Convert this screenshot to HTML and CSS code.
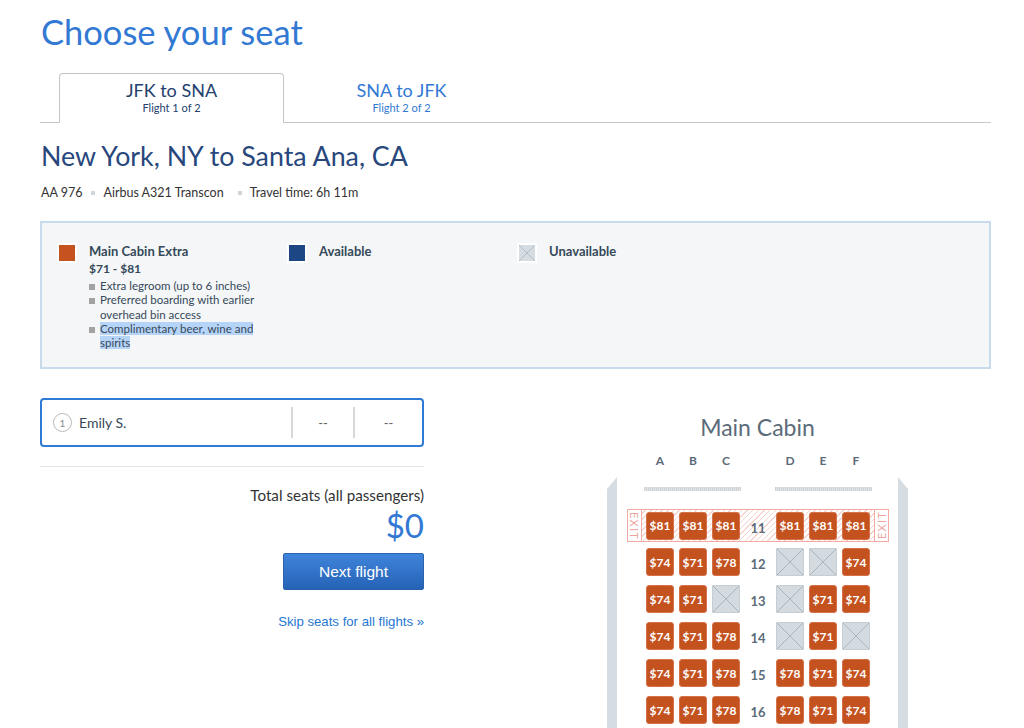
FILE: index.html
```html
<!DOCTYPE html>
<html lang="en">
<head>
<meta charset="utf-8">
<title>Choose your seat</title>
<link rel="stylesheet" href="styles.css">
</head>
<body>
<div class="page">
  <h1 class="title">Choose your seat</h1>

  <div class="tabs">
    <div class="tab active">
      <div class="tab-main">JFK to SNA</div>
      <div class="tab-sub">Flight 1 of 2</div>
    </div>
    <div class="tab">
      <div class="tab-main">SNA to JFK</div>
      <div class="tab-sub">Flight 2 of 2</div>
    </div>
  </div>

  <h2 class="route">New York, NY to Santa Ana, CA</h2>
  <div class="info">
    <span>AA 976</span><span class="dot"></span><span>Airbus A321 Transcon</span><span class="dot dot-wide"></span><span>Travel time: 6h 11m</span>
  </div>

  <div class="legend">
    <div class="legend-item">
      <span class="swatch swatch-mce"></span>
      <div class="legend-text">
        <div class="legend-name">Main Cabin Extra</div>
        <div class="legend-price">$71 - $81</div>
        <ul class="perks">
          <li><span class="bullet"></span><span>Extra legroom (up to 6 inches)</span></li>
          <li><span class="bullet"></span><span>Preferred boarding with earlier overhead bin access</span></li>
          <li><span class="bullet"></span><span><span class="hl">Complimentary beer, wine and</span><br><span class="hl">spirits</span></span></li>
        </ul>
      </div>
    </div>
    <div class="legend-item">
      <span class="swatch swatch-avail"></span>
      <div class="legend-text"><div class="legend-name">Available</div></div>
    </div>
    <div class="legend-item">
      <span class="swatch swatch-unavail"></span>
      <div class="legend-text"><div class="legend-name">Unavailable</div></div>
    </div>
  </div>

  <div class="main">
    <div class="left">
      <div class="passenger">
        <span class="pnum">1</span>
        <span class="pname">Emily S.</span>
        <span class="pseat">--</span>
        <span class="pseat">--</span>
      </div>
      <div class="divider"></div>
      <div class="total-label">Total seats (all passengers)</div>
      <div class="total">$0</div>
      <button class="next">Next flight</button>
      <a class="skip" href="#">Skip seats for all flights »</a>
    </div>

    <div class="map">
      <div class="cabin-title">Main Cabin</div>
      <div class="letters">
        <div class="group"><span>A</span><span>B</span><span>C</span></div>
        <div class="aisle"></div>
        <div class="group"><span>D</span><span>E</span><span>F</span></div>
      </div>
      <div class="fuselage">
        <div class="wall wall-left"></div>
        <div class="cabin">
          <div class="bars"><span class="bar"></span><span class="bar"></span></div>

          <div class="exit-row">
            <span class="exit exit-left">EXIT</span>
            <div class="exit-inner">
              <div class="group"><span class="seat">$81</span><span class="seat">$81</span><span class="seat">$81</span></div>
              <div class="aisle num">11</div>
              <div class="group"><span class="seat">$81</span><span class="seat">$81</span><span class="seat">$81</span></div>
            </div>
            <span class="exit exit-right">EXIT</span>
          </div>

          <div class="row">
            <div class="group"><span class="seat">$74</span><span class="seat">$71</span><span class="seat">$78</span></div>
            <div class="aisle num">12</div>
            <div class="group"><span class="seat na"></span><span class="seat na"></span><span class="seat">$74</span></div>
          </div>
          <div class="row">
            <div class="group"><span class="seat">$74</span><span class="seat">$71</span><span class="seat na"></span></div>
            <div class="aisle num">13</div>
            <div class="group"><span class="seat na"></span><span class="seat">$71</span><span class="seat">$74</span></div>
          </div>
          <div class="row">
            <div class="group"><span class="seat">$74</span><span class="seat">$71</span><span class="seat">$78</span></div>
            <div class="aisle num">14</div>
            <div class="group"><span class="seat na"></span><span class="seat">$71</span><span class="seat na"></span></div>
          </div>
          <div class="row">
            <div class="group"><span class="seat">$74</span><span class="seat">$71</span><span class="seat">$78</span></div>
            <div class="aisle num">15</div>
            <div class="group"><span class="seat">$78</span><span class="seat">$71</span><span class="seat">$74</span></div>
          </div>
          <div class="row">
            <div class="group"><span class="seat">$74</span><span class="seat">$71</span><span class="seat">$78</span></div>
            <div class="aisle num">16</div>
            <div class="group"><span class="seat">$78</span><span class="seat">$71</span><span class="seat">$74</span></div>
          </div>
        </div>
        <div class="wall wall-right"></div>
      </div>
    </div>
  </div>
</div>
</body>
</html>
```
FILE: styles.css
```css
* { box-sizing: border-box; }
html, body { margin: 0; padding: 0; background: #fff; }
body {
  font-family: Lato, "Open Sans", sans-serif;
  color: #36495a;
  height: 728px;
  overflow: hidden;
}
.page { width: 1024px; padding: 0 33px 0 40px; }

.title {
  margin: 12px 0 0 1px;
  font-size: 34.5px;
  line-height: 40px;
  font-weight: 400;
  color: #3279d3;
}

.tabs {
  display: flex;
  gap: 5px;
  margin-top: 21px;
  padding-left: 19px;
  border-bottom: 1px solid #c8c8c8;
  height: 50px;
}
.tab {
  width: 225px;
  height: 50px;
  text-align: center;
  padding-top: 6px;
  color: #3279d3;
}
.tab.active {
  border: 1px solid #c4c4c4;
  border-bottom: none;
  border-radius: 4px 4px 0 0;
  background: #fff;
  padding-top: 5px;
  color: #24406d;
}
.tab-main { font-size: 18px; line-height: 22px; }
.tab-sub { font-size: 11px; line-height: 14px; }

.route {
  margin: 17px 0 0 1px;
  font-size: 26.8px;
  line-height: 32px;
  font-weight: 400;
  color: #28477c;
}

.info {
  display: flex;
  align-items: center;
  margin-top: 12px;
  font-size: 12.5px;
  line-height: 18px;
  color: #333;
  padding-left: 1px;
}
.dot {
  width: 4px; height: 4px;
  background: #cfd6dc;
  margin: 0 8px 0 9px;
}
.dot-wide { margin-left: 14px; }

.legend {
  margin-top: 19px;
  height: 148px;
  border: 2px solid #c7dbec;
  background: #f4f6f7;
  padding: 19px 15px 0;
  display: flex;
}
.legend-item { width: 230px; display: flex; align-items: flex-start; }
.swatch {
  width: 20px; height: 20px;
  border: 2px solid #fff;
  flex: none;
  margin-top: 1px;
}
.swatch-mce { background: #c5521f; }
.swatch-avail { background: #1d4685; }
.swatch-unavail {
  background:
    linear-gradient(to top right, transparent calc(50% - 0.6px), #b3bdc6 50%, transparent calc(50% + 0.6px)),
    linear-gradient(to bottom right, transparent calc(50% - 0.6px), #b3bdc6 50%, transparent calc(50% + 0.6px)),
    #d5dce2;
}
.legend-text { margin-left: 12px; width: 170px; }
.legend-name { font-size: 13px; line-height: 18px; font-weight: 700; color: #36495a; }
.legend-price { font-size: 12px; line-height: 18px; font-weight: 700; }
.perks {
  list-style: none;
  margin: 1px 0 0;
  padding: 0;
  font-size: 11.5px;
  line-height: 14.3px;
  width: 168px;
}
.perks li { display: flex; }
.bullet {
  flex: none;
  width: 6px; height: 6px;
  background: #a3a3a3;
  margin: 5px 5px 0 0;
}
.hl { background: #b6d4f8; }

.main { display: flex; margin-top: 29px; }
.left { width: 384px; display: flex; flex-direction: column; align-items: flex-end; }
.passenger {
  width: 384px;
  height: 49px;
  border: 2px solid #2f7ad6;
  border-radius: 4px;
  display: flex;
  align-items: center;
  padding-left: 11px;
}
.pnum {
  width: 19px; height: 19px;
  border: 1px solid #b9b9b9;
  border-radius: 50%;
  font-size: 10px;
  color: #8a8a8a;
  display: flex; align-items: center; justify-content: center;
  flex: none;
}
.pname { font-size: 14px; margin-left: 7px; flex: 1; color: #36495a; }
.pseat {
  width: 62px;
  height: 31px;
  border-left: 2px solid #d5d9dc;
  display: flex; align-items: center; justify-content: center;
  font-size: 13px;
  color: #666;
}
.pseat:last-child { width: 69px; }
.divider { width: 384px; height: 1px; background: #dfe6ec; margin-top: 19px; }
.total-label { margin-top: 19px; font-size: 15.2px; line-height: 18px; color: #333; }
.total { margin-top: 3px; font-size: 33px; line-height: 36px; color: #3279d3; }
.next {
  margin-top: 10px;
  width: 141px; height: 37px;
  border: 1px solid #2b62ad;
  border-radius: 2px;
  background: linear-gradient(#3f85db, #2562b6);
  color: #fff;
  font-family: "Liberation Sans", Arial, sans-serif;
  font-size: 15.5px;
  padding: 0;
}
.skip {
  margin-top: 24px;
  font-family: "Liberation Sans", Arial, sans-serif;
  font-size: 13.2px;
  line-height: 16px;
  color: #2677d3;
  text-decoration: none;
}

.map { width: 301px; margin-left: 183px; padding-top: 15px; }
.cabin-title { text-align: center; font-size: 23px; line-height: 28px; color: #5b6b79; }
.letters {
  display: flex;
  margin-top: 12px;
  padding-left: 39px;
  font-size: 12px;
  line-height: 16px;
  font-weight: 700;
  color: #5b6b79;
}
.letters .group span { width: 28px; text-align: center; }

.group { display: flex; gap: 5px; }
.aisle { width: 36px; flex: none; }

.fuselage { display: flex; margin-top: 8px; height: 300px; }
.wall { width: 10px; background: #d5dde3; }
.wall-left { clip-path: polygon(0 12px, 100% 0, 100% 100%, 0 100%); }
.wall-right { clip-path: polygon(0 0, 100% 12px, 100% 100%, 0 100%); }
.cabin { width: 281px; background: #fff; padding-top: 10px; }

.bars { display: flex; gap: 34px; padding-left: 27px; }
.bar {
  width: 97px; height: 4px;
  background: repeating-linear-gradient(90deg, #cdd1d4 0 1px, #e2e4e6 1px 2px);
}

.exit-row {
  margin: 18px 0 0 10px;
  width: 262px;
  height: 33px;
  border: 1px solid #f2aaa2;
  display: flex;
  background: repeating-linear-gradient(135deg, #f6d3ce 0 1px, #fff 1px 4px);
}
.exit {
  width: 14px;
  background: #fff;
  color: #eba59d;
  font-size: 11px;
  letter-spacing: 1.2px;
  writing-mode: vertical-rl;
  display: flex; align-items: center; justify-content: center;
  text-align: center;
}
.exit-left { border-right: 1px solid #f2aaa2; }
.exit-right { transform: rotate(180deg); border-right: 1px solid #f2aaa2; }
.exit-inner { display: flex; align-items: center; padding: 0 4px; }

.row { display: flex; align-items: center; margin: 6px 0 0 29px; height: 28px; }
.row + .row { margin-top: 9px; }

.seat {
  width: 28px; height: 28px;
  background: #c4521f;
  border: 1px solid #d6714a;
  border-radius: 3px;
  color: #fff;
  font-size: 12px;
  font-weight: 700;
  display: flex; align-items: center; justify-content: center;
}
.seat.na {
  border: 1px solid #c6ced5;
  border-radius: 1px;
  background:
    linear-gradient(to top right, transparent calc(50% - 0.6px), #a9b4bd 50%, transparent calc(50% + 0.6px)),
    linear-gradient(to bottom right, transparent calc(50% - 0.6px), #a9b4bd 50%, transparent calc(50% + 0.6px)),
    #d3dae0;
}
.num {
  text-align: center;
  font-size: 13px;
  font-weight: 700;
  color: #5b6b79;
  padding-top: 4px;
}
```
